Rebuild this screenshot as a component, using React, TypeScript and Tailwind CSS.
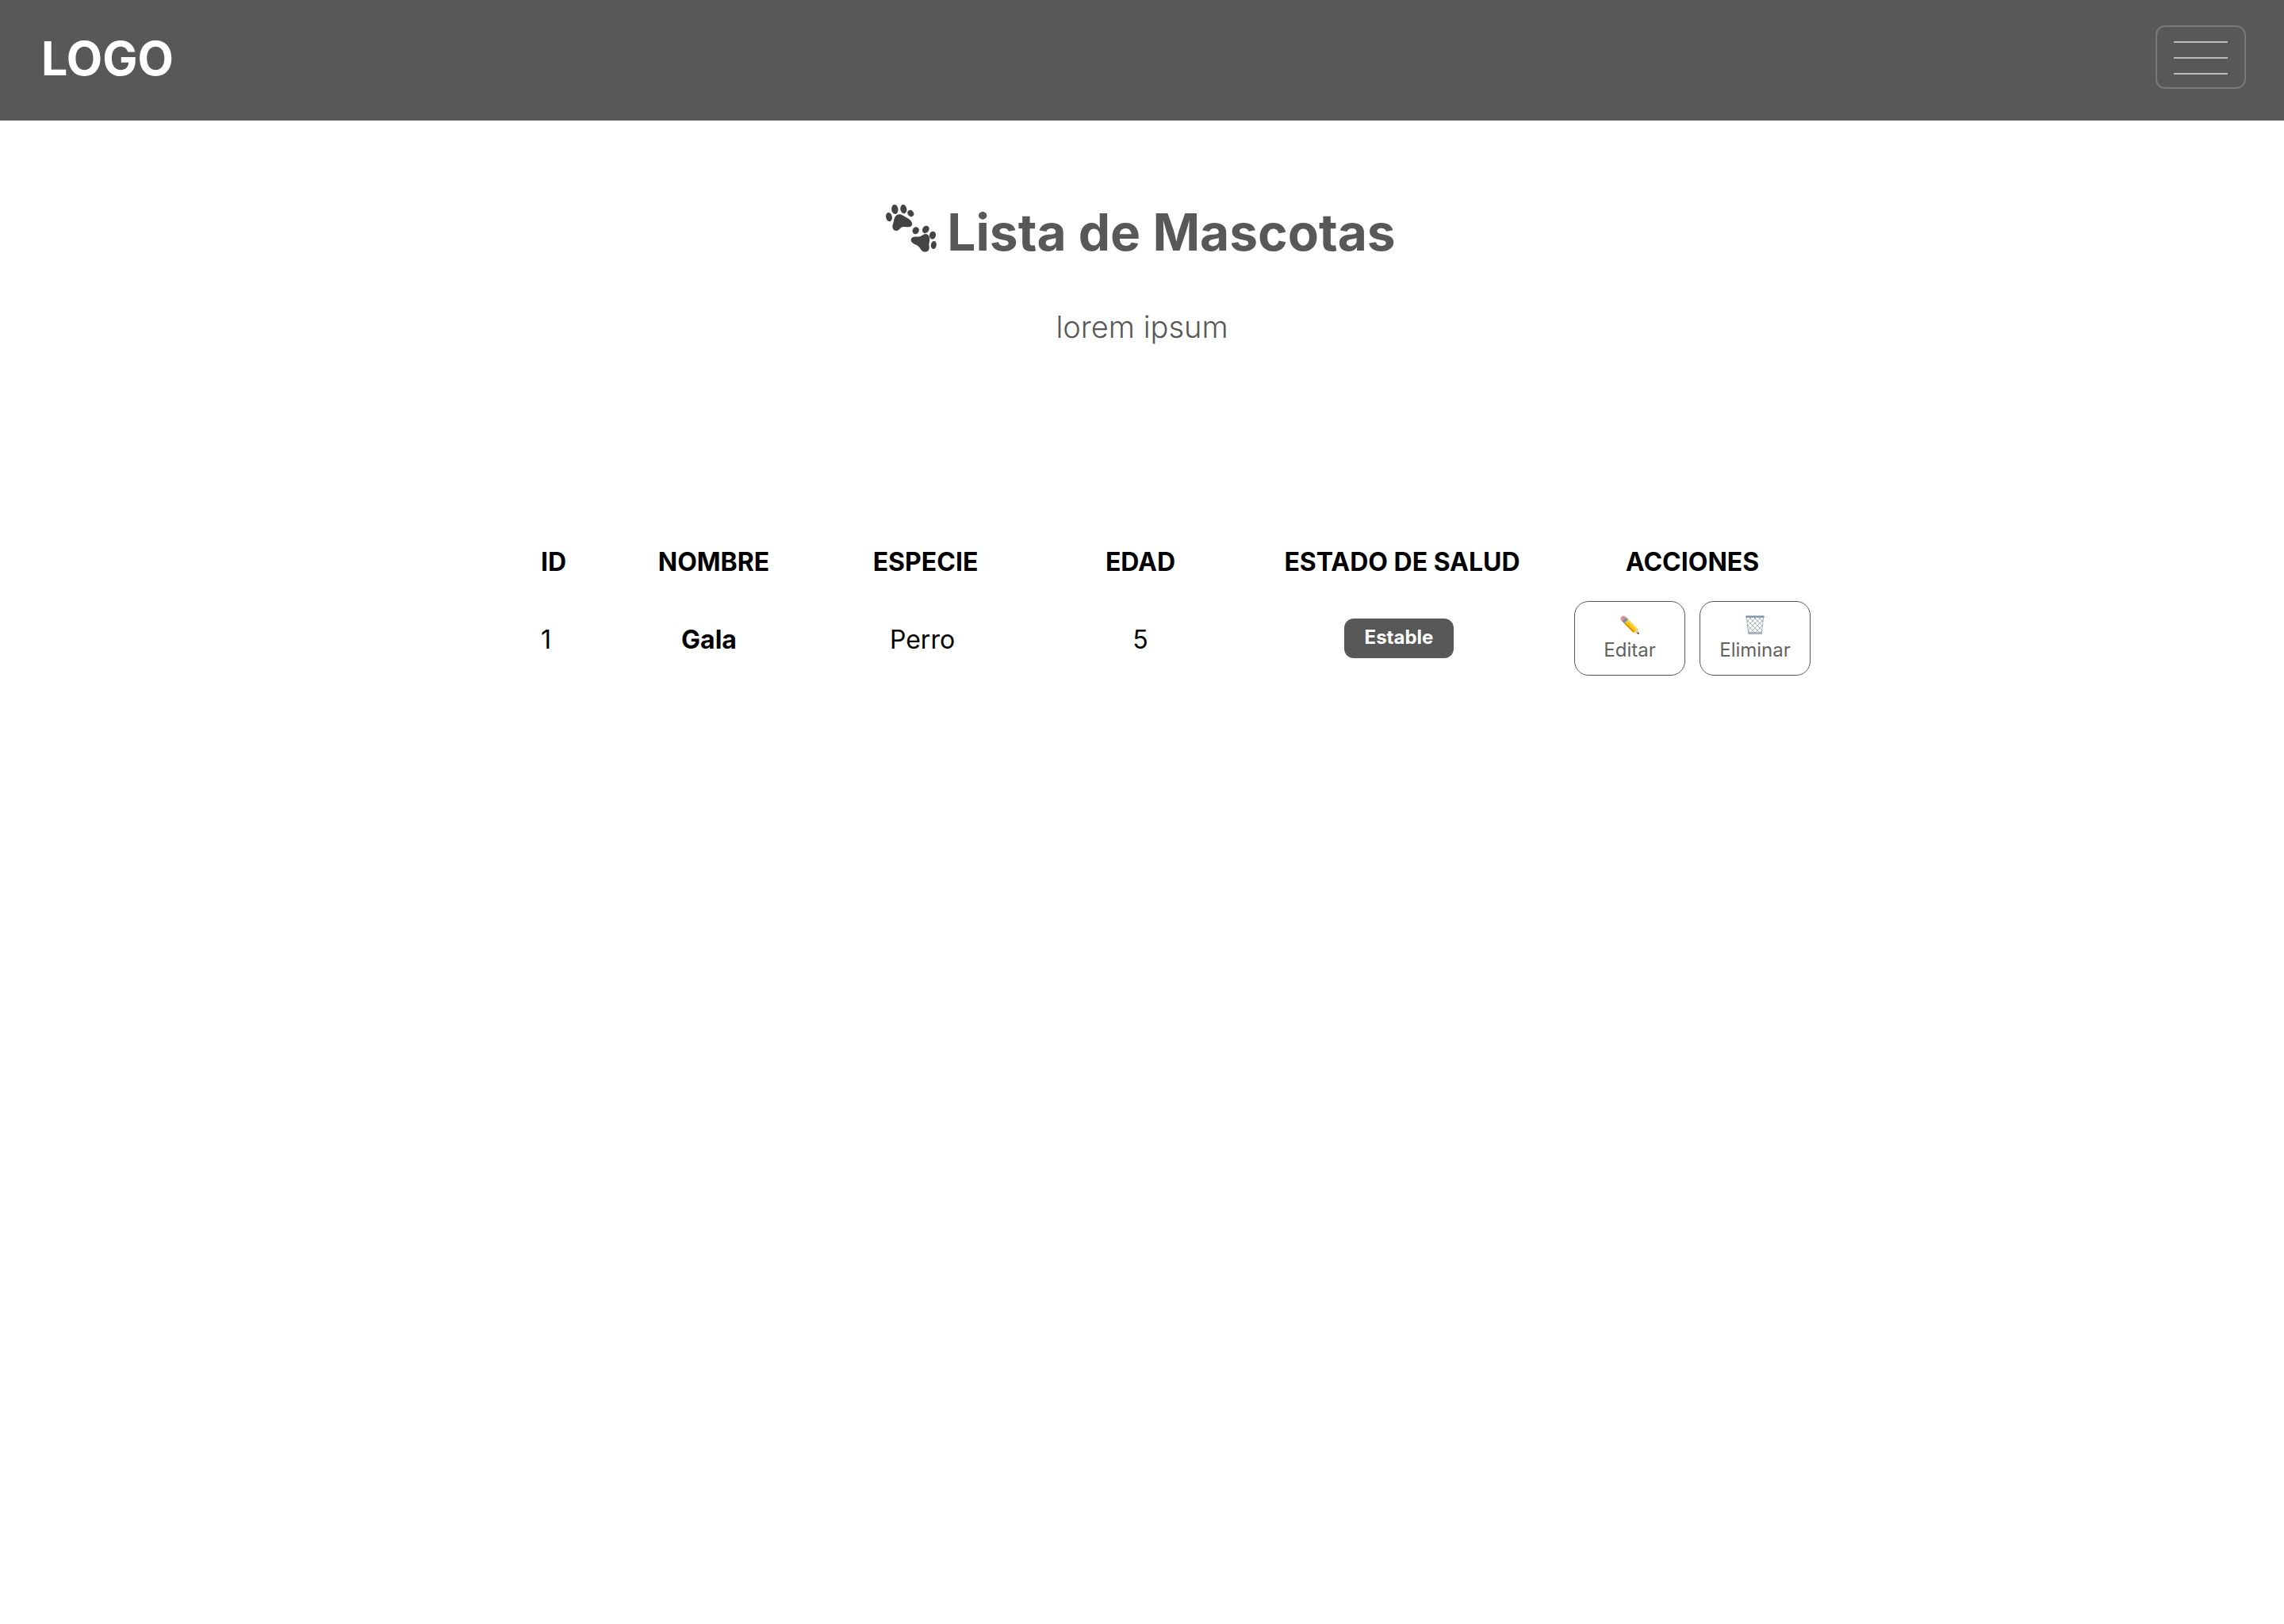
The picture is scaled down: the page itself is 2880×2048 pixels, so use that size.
import React from "react";

const pets = [
  { id: 1, nombre: "Gala", especie: "Perro", edad: 5, estado: "Estable" },
];

function Paws() {
  return (
    <svg viewBox="45 52 198 186" className="h-[62px] w-[66px] shrink-0" fill="#444444" aria-hidden="true">
      <ellipse cx="60" cy="102" rx="11.5" ry="17" transform="rotate(-12 60 102)" />
      <ellipse cx="82" cy="73" rx="12.5" ry="18" transform="rotate(-6 82 73)" />
      <ellipse cx="115" cy="72" rx="12" ry="17" transform="rotate(-10 115 72)" />
      <ellipse cx="142" cy="88" rx="11" ry="13" transform="rotate(-38 142 88)" />
      <path d="M98 92C106 91 112 96 119 100C128 106 135 107 142 116C149 125 150 133 142 138C133 142 123 138 114 139C104 140 101 149 93 153C84 156 75 151 73 141C72 132 76 127 78 117C80 105 85 93 98 92Z" />
      <ellipse cx="161" cy="153" rx="12" ry="14" transform="rotate(30 161 153)" />
      <ellipse cx="199" cy="149" rx="12" ry="15" transform="rotate(35 199 149)" />
      <ellipse cx="225" cy="171" rx="12" ry="15" transform="rotate(12 225 171)" />
      <ellipse cx="229" cy="208" rx="10.5" ry="15" transform="rotate(10 229 208)" />
      <path d="M199 166C209 167 213 175 214 185C214 194 211 199 211 207C212 214 214 222 209 229C202 236 190 235 184 229C178 223 176 215 168 210C161 206 150 203 145 196C141 189 144 180 151 178C161 175 170 178 179 175C186 172 191 166 199 166Z" />
    </svg>
  );
}

function Pencil() {
  return (
    <svg viewBox="0 0 24 24" className="size-6" aria-hidden="true">
      <path d="M1.2 2.2Q3-.4 5.800.9L7.600 2.800L2.700 7.700L1 5.900Q-.2 4 1.200 2.200Z" fill="#e58b92" />
      <path d="M7.3 2.400L10.300 5.200L5 10.300L2.200 7.300Z" fill="#8397a6" />
      <path d="M8.300 3.400L3.200 8.400M9.300 4.300L4.200 9.400" stroke="#5f7280" strokeWidth=".5" />
      <path d="M10.300 5.200L22 16.800L16.600 21.800L5 10.300Z" fill="#fbc516" />
      <path d="M10.300 5.200L22 16.800L20.500 18.200L8.800 6.600Z" fill="#ffdb45" />
      <path d="M6.700 8.700L5 10.300L16.600 21.800L18.300 20.200Z" fill="#d99a0b" />
      <path d="M22 16.800L23.700 23.500L16.600 21.800Q16.800 20.500 18.300 20.200Q18.600 18.500 20.300 18.300Q20.500 17 22 16.800Z" fill="#eccb98" />
      <path d="M23.100 21L23.800 23.700L21 23Z" fill="#2e2e2e" />
    </svg>
  );
}

function Wastebasket() {
  return (
    <svg viewBox="0 0 24 24" className="size-6" aria-hidden="true">
      <path d="M1.200 2H22.800L20.600 23.500H3.400Z" fill="#ffffff" />
      <g stroke="#8792a0" strokeWidth=".7" fill="none">
        <path d="M2 6L18 22M5 3L20.600 18.600M11 3L21.400 13.400M17 3L22 8M2.600 12.600L12 22M3.300 19.300L6 22" />
        <path d="M22 6L6 22M19 3L3.400 18.600M13 3L2.600 13.400M7 3L2 8M21.400 12.600L12 22M20.700 19.300L18 22" />
      </g>
      <path d="M1.500 3L3.600 22M22.500 3L20.400 22" stroke="#8d9aa8" strokeWidth=".8" />
      <path d="M3.300 21.200H20.700L20.500 23.800H3.500Z" fill="#8d9cae" />
      <path d="M5 22.300H19" stroke="#bcc7d3" strokeWidth=".8" />
      <rect x=".3" y=".5" width="23.400" height="2.300" rx="1" fill="#647a94" />
      <path d="M2 1.500H22" stroke="#92a8c0" strokeWidth=".7" />
    </svg>
  );
}

function ActionButton({ icon, label }: { icon: React.ReactNode; label: string }) {
  return (
    <button
      type="button"
      className="flex h-[94px] w-[140px] flex-col items-center rounded-[18px] border border-[#585858] pt-[17px] text-2xl leading-8 text-[#626262]"
    >
      {icon}
      <span className="mt-1">{label}</span>
    </button>
  );
}

export default function App() {
  return (
    <div className="min-h-screen bg-white font-['Inter',sans-serif] text-black">
      <header className="flex h-[152px] items-start justify-between bg-[#585858] pt-8 pr-12 pl-[52px]">
        <a href="#" className="mt-1.5 text-[59px] leading-[72px] font-bold text-white">
          LOGO
        </a>
        <button
          type="button"
          aria-label="Abrir menú"
          className="flex h-20 w-[114px] flex-col items-center gap-[18px] rounded-xl border-2 border-[#797979] pt-[18px]"
        >
          <span className="h-0.5 w-[68px] bg-[#bbbbbb]" />
          <span className="h-0.5 w-[68px] bg-[#bbbbbb]" />
          <span className="h-0.5 w-[68px] bg-[#bbbbbb]" />
        </button>
      </header>

      <main>
        <div className="flex flex-col items-center pt-[101px] text-[#585858]">
          <h1 className="flex items-start gap-3 pr-1 text-[64px] leading-[80px] font-bold">
            <span className="pt-1">
              <Paws />
            </span>
            Lista de Mascotas
          </h1>
          <p className="mt-[55px] text-[38px] leading-[48px] font-light">lorem ipsum</p>
        </div>

        <div className="pt-[253px] pl-[104px]">
          <table className="mx-auto w-full max-w-[1620px] table-fixed text-center text-[32px] leading-10">
            <colgroup>
              <col className="w-[90px]" />
              <col className="w-[256px]" />
              <col className="w-[278px]" />
              <col className="w-[264px]" />
              <col className="w-[396px]" />
              <col className="w-[336px]" />
            </colgroup>
            <thead>
              <tr className="h-[69px] align-top">
                <th scope="col" className="text-left font-bold">ID</th>
                <th scope="col" className="font-bold">NOMBRE</th>
                <th scope="col" className="font-bold">ESPECIE</th>
                <th scope="col" className="font-bold">EDAD</th>
                <th scope="col" className="font-bold">ESTADO DE SALUD</th>
                <th scope="col" className="font-bold">ACCIONES</th>
              </tr>
            </thead>
            <tbody>
              {pets.map((pet) => (
                <tr key={pet.id}>
                  <td className="pt-1 text-left">{pet.id}</td>
                  <td className="pt-1 pr-3 font-bold">{pet.nombre}</td>
                  <td className="pt-1 pr-2">{pet.especie}</td>
                  <td className="pt-1">{pet.edad}</td>
                  <td className="pr-2">
                    <span className="mx-auto block h-[50px] w-[138px] rounded-xl bg-[#585858] text-2xl leading-[48px] font-bold text-white">
                      {pet.estado}
                    </span>
                  </td>
                  <td>
                    <div className="flex justify-center gap-[18px]">
                      <ActionButton icon={<Pencil />} label="Editar" />
                      <ActionButton icon={<Wastebasket />} label="Eliminar" />
                    </div>
                  </td>
                </tr>
              ))}
            </tbody>
          </table>
        </div>
      </main>
    </div>
  );
}
